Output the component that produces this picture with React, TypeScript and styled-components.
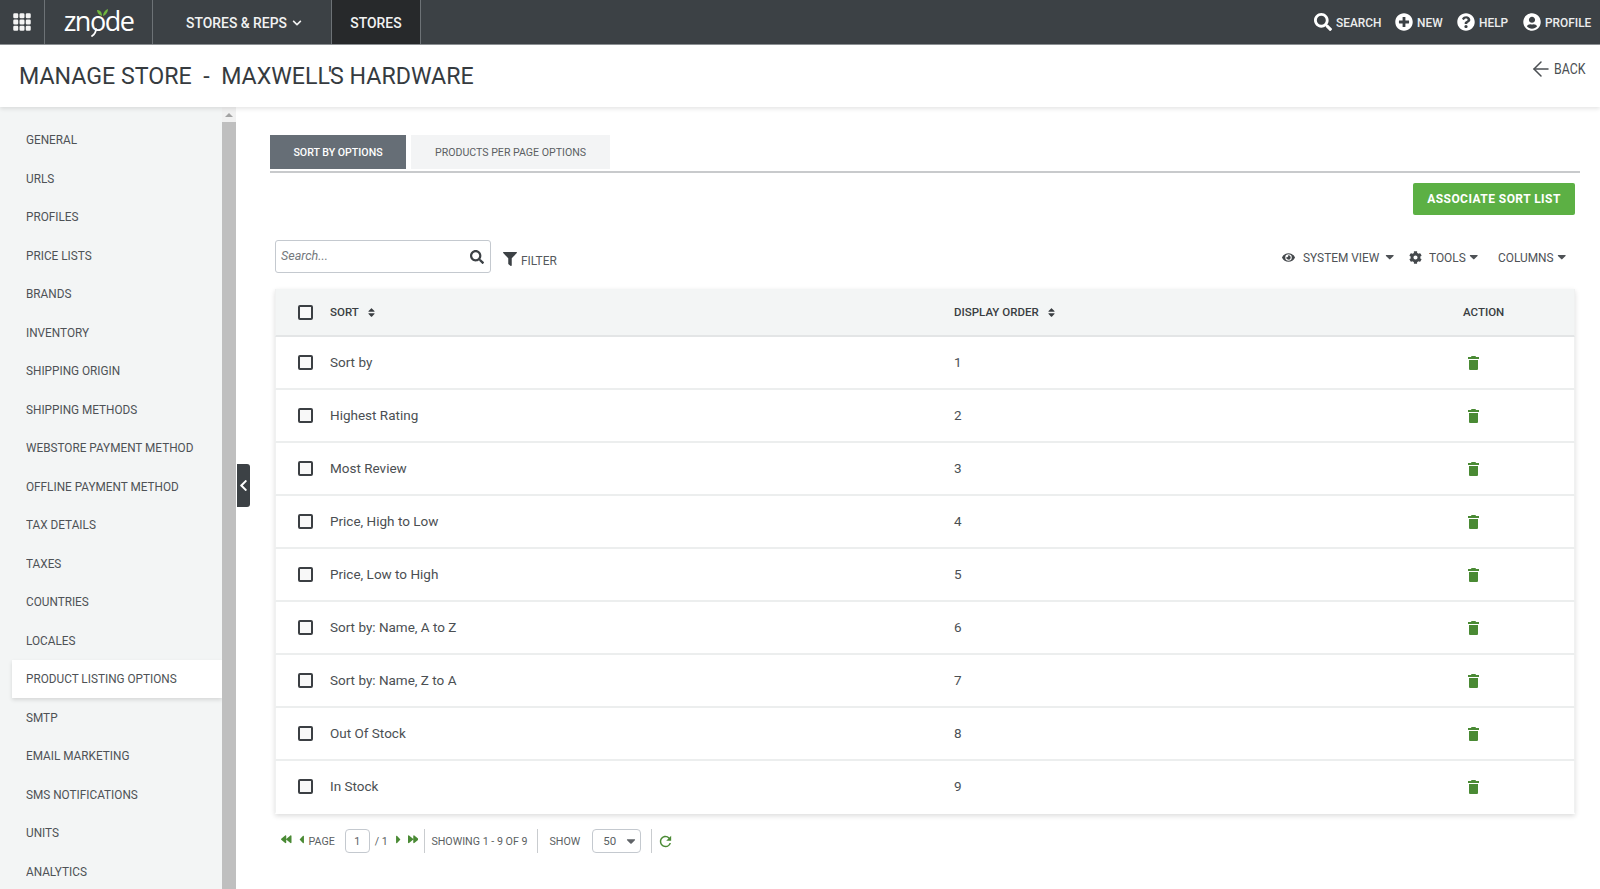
import React from "react";
import styled, { createGlobalStyle } from "styled-components";
import { BsGrid3X3GapFill } from "react-icons/bs";
import {
  FaSearch, FaPlusCircle, FaQuestionCircle, FaUserCircle, FaFilter, FaCog, FaEye,
  FaCaretDown, FaSort, FaChevronLeft, FaChevronDown, FaCaretLeft, FaCaretRight, FaBackward, FaForward,
} from "react-icons/fa";
import { MdRefresh } from "react-icons/md";
import { ArrowLeft } from "lucide-react";

const Global = createGlobalStyle`
  html, body { margin: 0; padding: 0; height: 100%; overflow: hidden; background: #fff; }
  body { font-family: Roboto, "Liberation Sans", sans-serif; color: #3d4145; }
  #root { height: 100%; }
  * { box-sizing: border-box; }
`;

const Page = styled.div`
  height: 889px;
  display: flex;
  flex-direction: column;
  overflow: hidden;
`;
const Squeeze = styled.span<{ $w: number }>`
  display: inline-block;
  width: ${(p) => p.$w}px;
  white-space: nowrap;
  transform: scaleX(0.88);
  transform-origin: left center;
`;
const TopBar = styled.header`
  height: 45px;
  flex: none;
  display: flex;
  align-items: stretch;
  background: #3c4145;
  border-bottom: 1px solid #8e9295;
  color: #fff;
`;
const GridCell = styled.div`
  width: 45px;
  border-right: 1px solid #6d7276;
  display: flex;
  align-items: center;
  justify-content: center;
  font-size: 20px;
  color: #f4f4f4;
`;
const LogoCell = styled.div`
  width: 108px;
  border-right: 1px solid #6d7276;
  display: flex;
  align-items: center;
  justify-content: center;
  padding-bottom: 3px;
`;
const LogoWrap = styled.span`
  position: relative;
  display: inline-block;
  font-family: "Open Sans", sans-serif;
  font-weight: 400;
  font-size: 27px;
  line-height: 32px;
  letter-spacing: -1.5px;
  color: #fff;
`;
const LogoMark = styled.svg`
  position: absolute;
  left: 0;
  top: 0;
`;
const NavItem = styled.div<{ $active?: boolean; $w: number; $pl?: number }>`
  width: ${(p) => p.$w}px;
  border-right: 1px solid #6d7276;
  display: flex;
  align-items: center;
  justify-content: center;
  gap: 5px;
  padding: 2px 0 0 ${(p) => p.$pl ?? 0}px;
  font-size: 13.9px;
  font-weight: 500;
  color: #f2f2f2;
  background: ${(p) => (p.$active ? "#27292b" : "transparent")};
`;
const TopRight = styled.div`
  margin-left: auto;
  display: flex;
  align-items: center;
  gap: 14px;
  padding-right: 9px;
`;
const TopAction = styled.div`
  display: flex;
  align-items: center;
  gap: 4px;
  font-size: 13.5px;
  font-weight: 500;
  color: #eceded;
  svg { font-size: 18px; color: #fff; }
`;
const TitleBar = styled.div`
  height: 62px;
  flex: none;
  display: flex;
  justify-content: space-between;
  padding: 0 16px 0 19px;
  background: #fff;
  box-shadow: 0 2px 4px rgba(0, 0, 0, 0.1);
  position: relative;
  z-index: 2;
`;
const Title = styled.h1`
  margin: 17px 0 0;
  font-size: 23.2px;
  line-height: 28px;
  font-weight: 400;
  color: #363b3f;
  white-space: pre;
`;
const Apostrophe = styled.span`
  margin: 0 -2px;
`;
const Back = styled.div`
  margin-top: 14px;
  display: flex;
  align-items: flex-start;
  gap: 6px;
  font-size: 14px;
  line-height: 20px;
  color: #4b4f53;
  svg { margin: -2px -5px 0 0; }
`;
const Body = styled.div`
  flex: 1;
  min-height: 0;
  display: flex;
  position: relative;
`;
const Side = styled.aside`
  width: 236px;
  flex: none;
  display: flex;
  background: #f3f5f5;
  overflow: hidden;
`;
const SideList = styled.nav`
  width: 222px;
  flex: none;
  padding: 13.4px 0 0 12px;
`;
const SideItem = styled.div<{ $active?: boolean }>`
  height: 38.53px;
  display: flex;
  align-items: center;
  padding-left: 14px;
  font-size: 13.2px;
  color: #4e5256;
  white-space: nowrap;
  background: ${(p) => (p.$active ? "#fff" : "transparent")};
  box-shadow: ${(p) => (p.$active ? "0 2px 4px rgba(0,0,0,0.12)" : "none")};
`;
const SideLabel = styled.span`
  transform: scaleX(0.893);
  transform-origin: left center;
`;
const ScrollTrack = styled.div`
  width: 14px;
  flex: none;
  display: flex;
  flex-direction: column;
  background: #f1f1f1;
`;
const ScrollArrow = styled.div`
  height: 15px;
  display: flex;
  align-items: center;
  justify-content: center;
  &::before {
    content: "";
    border-left: 4px solid transparent;
    border-right: 4px solid transparent;
    border-bottom: 4px solid #a3a3a3;
  }
`;
const ScrollThumb = styled.div`
  flex: 1;
  background: #bfbfbf;
`;
const Collapse = styled.div`
  position: absolute;
  left: 237px;
  top: 357px;
  width: 13px;
  height: 43px;
  background: #3c4145;
  border-radius: 0 3px 3px 0;
  display: flex;
  align-items: center;
  justify-content: center;
  color: #fff;
  font-size: 13px;
`;
const Main = styled.main`
  flex: 1;
  min-width: 0;
  padding: 28px 20px 0 34px;
`;
const Tabs = styled.div`
  display: flex;
  gap: 5px;
  height: 38px;
  border-bottom: 2px solid #c8cacc;
  padding-bottom: 2px;
`;
const Tab = styled.div<{ $active?: boolean; $w: number }>`
  width: ${(p) => p.$w}px;
  height: 34px;
  display: flex;
  align-items: center;
  justify-content: center;
  font-size: 10.6px;
  font-weight: ${(p) => (p.$active ? 500 : 400)};
  color: ${(p) => (p.$active ? "#fff" : "#5b5f63")};
  background: ${(p) => (p.$active ? "#666e76" : "#f3f4f5")};
`;
const ActionRow = styled.div`
  display: flex;
  justify-content: flex-end;
  margin-top: 10px;
  padding-right: 5px;
`;
const GreenButton = styled.button`
  width: 162px;
  height: 32px;
  border: 0;
  border-radius: 2px;
  background: #5cb044;
  color: #fff;
  font-family: inherit;
  font-size: 12px;
  font-weight: 700;
  letter-spacing: 0.45px;
  padding: 0 0 1px;
`;
const Toolbar = styled.div`
  display: flex;
  align-items: flex-start;
  justify-content: space-between;
  margin-top: 25px;
  padding: 0 12px 0 5px;
  height: 49px;
`;
const ToolLeft = styled.div`
  display: flex;
  align-items: flex-start;
`;
const SearchBox = styled.div`
  width: 216px;
  height: 33px;
  border: 1px solid #c4c9cf;
  border-radius: 3px;
  display: flex;
  align-items: center;
  justify-content: space-between;
  padding: 0 6px 3px 5px;
  font-size: 12.5px;
  font-style: italic;
  color: #74787c;
  svg { font-size: 14px; color: #3c4145; font-style: normal; margin-top: 4px; }
`;
const FilterLink = styled.div`
  margin: 12px 0 0 12px;
  display: flex;
  align-items: center;
  gap: 4px;
  font-size: 13.5px;
  line-height: 16px;
  color: #55595d;
  svg { font-size: 14px; color: #3c4145; margin-top: -3px; }
`;
const ToolRight = styled.div`
  display: flex;
  align-items: center;
  gap: 13px;
  margin-top: 8px;
  height: 18px;
`;
const ToolItem = styled.div<{ $gap: number; $ml?: number }>`
  display: flex;
  align-items: center;
  gap: ${(p) => p.$gap}px;
  margin-left: ${(p) => p.$ml ?? 0}px;
  font-size: 13.5px;
  color: #4e5256;
`;
const ToolIcon = styled.span<{ $mr: number }>`
  display: inline-flex;
  margin-right: ${(p) => p.$mr}px;
  color: #44484c;
  font-size: 13px;
`;
const Table = styled.div`
  margin: 0 5px;
  box-shadow: 0 2px 5px rgba(0, 0, 0, 0.14);
`;
const Row = styled.div<{ $head?: boolean }>`
  display: grid;
  grid-template-columns: 54px 624px 509px 1fr;
  align-items: center;
  height: ${(p) => (p.$head ? 48 : 53)}px;
  background: ${(p) => (p.$head ? "#f3f5f5" : "#fff")};
  border-bottom: ${(p) => (p.$head ? "2px solid #e3e5e6" : "2px solid #eceeee")};
  border-left: 1px solid #f0f1f1;
  border-right: 1px solid #f0f1f1;
  &:last-child { border-bottom-color: transparent; }
`;
const CheckCell = styled.div`
  display: flex;
  justify-content: flex-start;
  padding-left: 22px;
`;
const CheckBox = styled.span`
  width: 15px;
  height: 15px;
  border: 2px solid #3b3f43;
  border-radius: 2px;
  background: #f8f8f8;
`;
const HeadCell = styled.div`
  display: flex;
  align-items: center;
  gap: 7px;
  font-size: 11.5px;
  font-weight: 500;
  color: #3a3e42;
  svg { font-size: 11px; }
`;
const Cell = styled.div`
  margin-top: -1px;
  font-size: 13.5px;
  color: #4b4f53;
`;
const TrashCell = styled.div`
  padding-left: 5px;
  color: #4a8a34;
  display: flex;
`;
const Pager = styled.div`
  display: flex;
  align-items: center;
  height: 24px;
  margin: 15px 0 0 11px;
  font-size: 10.7px;
  color: #5b5f63;
`;
const PagerIcons = styled.span<{ $ml?: number; $mr?: number }>`
  display: inline-flex;
  align-items: center;
  gap: 3px;
  color: #4a8a34;
  font-size: 10.5px;
  margin: -3px ${(p) => p.$mr ?? 0}px 0 ${(p) => p.$ml ?? 0}px;
`;
const PagerText = styled.span<{ $ml?: number }>`
  margin-left: ${(p) => p.$ml ?? 0}px;
  white-space: nowrap;
`;
const PageInput = styled.span`
  width: 25px;
  height: 24px;
  margin-left: 10px;
  border: 1px solid #c4c9cf;
  border-radius: 4px;
  display: flex;
  align-items: center;
  justify-content: center;
`;
const Sep = styled.span<{ $ml: number }>`
  width: 1px;
  height: 24px;
  background: #c9cccf;
  margin-left: ${(p) => p.$ml}px;
`;
const ShowSelect = styled.span`
  width: 49px;
  height: 24px;
  margin-left: 12px;
  border: 1px solid #c4c9cf;
  border-radius: 4px;
  display: flex;
  align-items: center;
  justify-content: space-between;
  padding: 0 2px 0 10px;
  font-size: 11.5px;
  svg { color: #5f6367; font-size: 14px; }
`;
const RefreshIcon = styled.span`
  display: inline-flex;
  margin-left: 5px;
  color: #4a8a34;
  font-size: 17px;
`;

const menu = [
  "GENERAL", "URLS", "PROFILES", "PRICE LISTS", "BRANDS", "INVENTORY", "SHIPPING ORIGIN", "SHIPPING METHODS",
  "WEBSTORE PAYMENT METHOD", "OFFLINE PAYMENT METHOD", "TAX DETAILS", "TAXES", "COUNTRIES", "LOCALES",
  "PRODUCT LISTING OPTIONS", "SMTP", "EMAIL MARKETING", "SMS NOTIFICATIONS", "UNITS", "ANALYTICS",
];
const rows = [
  "Sort by", "Highest Rating", "Most Review", "Price, High to Low", "Price, Low to High",
  "Sort by: Name, A to Z", "Sort by: Name, Z to A", "Out Of Stock", "In Stock",
];

const TrashIcon = () => (
  <svg width="11" height="14" viewBox="0 0 11 14" fill="currentColor">
    <path d="M3.5 0h4l.5 1h3v2H0V1h3zM1 4h9v9a1 1 0 0 1-1 1H2a1 1 0 0 1-1-1z" />
  </svg>
);

export default function App() {
  return (
    <Page>
      <Global />
      <TopBar>
        <GridCell><BsGrid3X3GapFill /></GridCell>
        <LogoCell>
          <LogoWrap>
            znode
            <LogoMark width="70" height="36" viewBox="0 0 70 36">
              <path d="M38 11c-3-1-5-3-5-6 3 0 5 2 5 6zM39 11c0-3 2-6 5-7 0 3-2 6-5 7z" fill="#6fb63f" />
              <path d="M32 24c0 3-1 5-4 7" fill="none" stroke="#fff" strokeWidth="1.8" strokeLinecap="round" />
            </LogoMark>
          </LogoWrap>
        </LogoCell>
        <NavItem $w={179} $pl={4}>STORES &amp; REPS <FaChevronDown size={10} /></NavItem>
        <NavItem $w={89} $active>STORES</NavItem>
        <TopRight>
          <TopAction><FaSearch /><Squeeze $w={45}>SEARCH</Squeeze></TopAction>
          <TopAction><FaPlusCircle /><Squeeze $w={26}>NEW</Squeeze></TopAction>
          <TopAction><FaQuestionCircle /><Squeeze $w={30}>HELP</Squeeze></TopAction>
          <TopAction><FaUserCircle /><Squeeze $w={46}>PROFILE</Squeeze></TopAction>
        </TopRight>
      </TopBar>
      <TitleBar>
        <Title>MANAGE STORE  -  MAXWELL<Apostrophe>'</Apostrophe>S HARDWARE</Title>
        <Back><ArrowLeft size={24} strokeWidth={1.5} /><Squeeze $w={30}>BACK</Squeeze></Back>
      </TitleBar>
      <Body>
        <Side>
          <SideList>
            {menu.map((m) => (
              <SideItem key={m} $active={m === "PRODUCT LISTING OPTIONS"}><SideLabel>{m}</SideLabel></SideItem>
            ))}
          </SideList>
          <ScrollTrack>
            <ScrollArrow />
            <ScrollThumb />
          </ScrollTrack>
        </Side>
        <Collapse><FaChevronLeft /></Collapse>
        <Main>
          <Tabs>
            <Tab $active $w={136}>SORT BY OPTIONS</Tab>
            <Tab $w={199}>PRODUCTS PER PAGE OPTIONS</Tab>
          </Tabs>
          <ActionRow><GreenButton>ASSOCIATE SORT LIST</GreenButton></ActionRow>
          <Toolbar>
            <ToolLeft>
              <SearchBox>Search...<FaSearch /></SearchBox>
              <FilterLink><FaFilter /><Squeeze $w={36}>FILTER</Squeeze></FilterLink>
            </ToolLeft>
            <ToolRight>
              <ToolItem $gap={3}><ToolIcon $mr={5}><FaEye /></ToolIcon><Squeeze $w={77}>SYSTEM VIEW</Squeeze><FaCaretDown /></ToolItem>
              <ToolItem $gap={1}><ToolIcon $mr={6}><FaCog /></ToolIcon><Squeeze $w={37}>TOOLS</Squeeze><FaCaretDown /></ToolItem>
              <ToolItem $gap={4} $ml={4}><Squeeze $w={53}>COLUMNS</Squeeze><FaCaretDown /></ToolItem>
            </ToolRight>
          </Toolbar>
          <Table>
            <Row $head>
              <CheckCell><CheckBox /></CheckCell>
              <HeadCell>SORT <FaSort /></HeadCell>
              <HeadCell>DISPLAY ORDER <FaSort /></HeadCell>
              <HeadCell>ACTION</HeadCell>
            </Row>
            {rows.map((r, i) => (
              <Row key={r}>
                <CheckCell><CheckBox /></CheckCell>
                <Cell>{r}</Cell>
                <Cell>{i + 1}</Cell>
                <TrashCell><TrashIcon /></TrashCell>
              </Row>
            ))}
          </Table>
          <Pager>
            <PagerIcons $mr={1}><FaBackward /><FaCaretLeft size={13} /></PagerIcons>
            <PagerText>PAGE</PagerText>
            <PageInput>1</PageInput>
            <PagerText $ml={5}>/ 1</PagerText>
            <PagerIcons $ml={4}><FaCaretRight size={13} /><FaForward /></PagerIcons>
            <Sep $ml={6} />
            <PagerText $ml={6}>SHOWING 1 - 9 OF 9</PagerText>
            <Sep $ml={10} />
            <PagerText $ml={11}>SHOW</PagerText>
            <ShowSelect>50<FaCaretDown /></ShowSelect>
            <Sep $ml={10} />
            <RefreshIcon><MdRefresh /></RefreshIcon>
          </Pager>
        </Main>
      </Body>
    </Page>
  );
}
